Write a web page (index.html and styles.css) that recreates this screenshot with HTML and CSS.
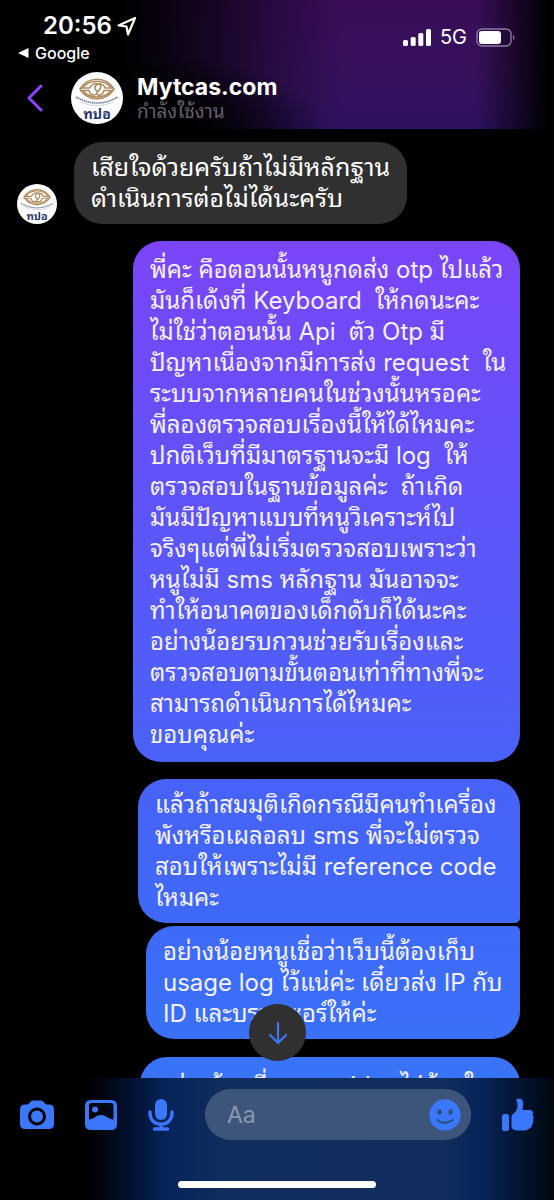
FILE: index.html
```html
<!DOCTYPE html>
<html lang="th">
<head>
<meta charset="utf-8">
<meta name="viewport" content="width=device-width, initial-scale=1">
<title>Mytcas.com</title>
<link rel="stylesheet" href="styles.css">
</head>
<body>
<div class="app">
  <header class="header">
    <div class="status">
      <div class="status-left">
        <div class="clock">20:56
          <svg width="20" height="20" viewBox="0 0 20 20"><path d="M1.500 9.5 18 2 11 18.500 9.500 10.500Z" fill="none" stroke="#fff" stroke-width="2.200" stroke-linejoin="round"/></svg>
        </div>
        <a class="return" href="#"><svg width="11" height="10" viewBox="0 0 11 10"><path d="M0 5 10.500 0V10Z" fill="#fff"/></svg>Google</a>
      </div>
      <div class="status-right">
        <svg width="28" height="19" viewBox="0 0 28 19" fill="#fff"><rect y="12" width="5" height="6" rx="1.500"/><rect x="7.700" y="9" width="5" height="9" rx="1.500"/><rect x="15.300" y="5" width="5" height="13" rx="1.500"/><rect x="23" y="1" width="5" height="17" rx="1.500"/></svg>
        <span>5G</span>
        <svg width="40" height="19" viewBox="0 0 40 19"><rect x="1" y="1" width="34" height="17" rx="5" fill="none" stroke="#8c79a6" stroke-width="1.400"/><rect x="3" y="3" width="22" height="13" rx="3" fill="#fff"/><path d="M37 7Q40 9.500 37 12Z" fill="#8c79a6"/></svg>
      </div>
    </div>
    <div class="contact">
      <button class="back" aria-label="Back"><svg width="16" height="28" viewBox="0 0 16 28"><path d="M14 2 2 14 14 26" fill="none" stroke="#8d43fb" stroke-width="3" stroke-linecap="round" stroke-linejoin="round"/></svg></button>
      <svg class="avatar" viewBox="0 0 52 52">
        <g id="crest">
          <circle cx="26" cy="26" r="26" fill="#fff"/>
          <g fill="none" stroke="#b08a5b" stroke-width="1.5">
            <path d="M9 17C17 4 35 4 43 17C35 30 17 30 9 17Z"/>
            <path d="M12 15.500C18 7 34 7 40 15.500M12 18.500C18 27 34 27 40 18.500"/>
            <path d="M9 16H18C20 16 20 12 24 11.500C29 11 31 14 29 17S24 20 26 22.500C28 24 32 23 33 18.500H43M9 18.500H18C19 23 23 24 26 22M43 16H34C33 12 29 11 26 12.500C22 15 24 19 28 20"/>
          </g>
          <path d="M5 25Q26 37 47 25" fill="none" stroke="#6d7d9b" stroke-width="1.6" stroke-dasharray="1.5 .6"/>
          <path d="M10 30Q26 37 42 30" fill="none" stroke="#a9b4c6" stroke-width="1" stroke-dasharray="1 .6"/>
          <text x="26" y="47" text-anchor="middle" class="crest-text">ทปอ</text>
        </g>
      </svg>
      <div>
        <h1 class="name">Mytcas.com</h1>
        <p class="presence">กำลังใช้งาน</p>
      </div>
    </div>
  </header>

  <main class="thread">
    <div class="row">
      <svg class="avatar small" viewBox="0 0 52 52"><use href="#crest"/></svg>
      <p class="bubble received">เสียใจด้วยครับถ้าไม่มีหลักฐาน<br>ดำเนินการต่อไม่ได้นะครับ</p>
    </div>
    <p class="bubble sent first">พี่คะ คือตอนนั้นหนูกดส่ง otp ไปแล้ว<br>มันก็เด้งที่ Keyboard &nbsp;ให้กดนะคะ<br>ไม่ใช่ว่าตอนนั้น Api &nbsp;ตัว Otp มี<br>ปัญหาเนื่องจากมีการส่ง request &nbsp;ใน<br>ระบบจากหลายคนในช่วงนั้นหรอคะ<br>พี่ลองตรวจสอบเรื่องนี้ให้ได้ไหมคะ<br>ปกติเว็บที่มีมาตรฐานจะมี log &nbsp;ให้<br>ตรวจสอบในฐานข้อมูลค่ะ &nbsp;ถ้าเกิด<br>มันมีปัญหาแบบที่หนูวิเคราะห์ไป<br>จริงๆแต่พี่ไม่เริ่มตรวจสอบเพราะว่า<br>หนูไม่มี sms หลักฐาน มันอาจจะ<br>ทำให้อนาคตของเด็กดับก็ได้นะคะ<br>อย่างน้อยรบกวนช่วยรับเรื่องและ<br>ตรวจสอบตามขั้นตอนเท่าที่ทางพี่จะ<br>สามารถดำเนินการได้ไหมคะ<br>ขอบคุณค่ะ</p>
    <p class="bubble sent second">แล้วถ้าสมมุติเกิดกรณีมีคนทำเครื่อง<br>พังหรือเผลอลบ sms พี่จะไม่ตรวจ<br>สอบให้เพราะไม่มี reference code<br>ไหมคะ</p>
    <p class="bubble sent third">อย่างน้อยหนูเชื่อว่าเว็บนี้ต้องเก็บ<br>usage log ไว้แน่ค่ะ เดี๋ยวส่ง IP กับ<br>ID และบราวเซอร์ให้ค่ะ</p>
    <p class="bubble sent fourth">อย่างน้อยที่ usage id จะไปด้วยใน</p>
    <button class="jump" aria-label="Scroll to latest"><svg width="20" height="24" viewBox="0 0 20 24"><path d="M10 2V22M2 14 10 22 18 14" fill="none" stroke="#3e77fa" stroke-width="2.200" stroke-linecap="round" stroke-linejoin="round"/></svg></button>
  </main>

  <footer class="footer">
    <form class="composer">
      <button type="button" aria-label="Camera"><svg width="34" height="29" viewBox="0 0 34 29"><path fill="#3b77fb" fill-rule="evenodd" d="M5 4.500H7C10 4.500 9.500.5 13 .5H21C24.500.5 24 4.500 27 4.500H29Q34 4.500 34 9.500V24Q34 29 29 29H5Q0 29 0 24V9.500Q0 4.500 5 4.500ZM17 7.500A9 9 0 1 0 17 25.500A9 9 0 1 0 17 7.500Z"/><circle cx="17" cy="16.500" r="6" fill="#3b77fb"/></svg></button>
      <button type="button" aria-label="Photo"><svg width="32" height="30" viewBox="0 0 32 30"><path fill="#3b77fb" fill-rule="evenodd" d="M6 0H26Q32 0 32 6V24Q32 30 26 30H6Q0 30 0 24V6Q0 0 6 0ZM6.500 3Q4 3 4 5.500V19.500C9 19.500 10.500 15 16 15S23 19.500 28.500 19.500V5.500Q28.500 3 26 3Z"/><circle cx="10" cy="9.500" r="3" fill="#3b77fb"/></svg></button>
      <button type="button" aria-label="Voice"><svg width="26" height="32" viewBox="0 0 26 32"><rect x="7" width="12" height="21" rx="6" fill="#3b77fb"/><path d="M2 13V14C2 29 24 29 24 14V13M13 25V30M6.500 30H19.500" fill="none" stroke="#3b77fb" stroke-width="3.400" stroke-linecap="round"/></svg></button>
      <div class="field">
        <input type="text" placeholder="Aa" aria-label="Message">
        <button type="button" aria-label="Emoji"><svg width="32" height="32" viewBox="0 0 32 32"><circle cx="16" cy="16" r="15.700" fill="#3b77fb"/><ellipse cx="10.500" cy="13" rx="2.200" ry="2.800" fill="#2d4f7d"/><ellipse cx="21.500" cy="13" rx="2.200" ry="2.800" fill="#2d4f7d"/><path d="M8.500 21Q16 27 23.500 21" fill="none" stroke="#2d4f7d" stroke-width="2.200" stroke-linecap="round"/></svg></button>
      </div>
      <button type="button" aria-label="Like"><svg width="32" height="34" viewBox="0 0 32 34" fill="#3b77fb"><rect x="0" y="16" width="7" height="17" rx="2.500"/><path d="M9.500 19Q9.500 17 11.500 15.500Q16 12 15.500 6L14.500 3Q14 .8 16.500.5Q22 .5 21 8L20.500 12H28Q31.500 12.500 31 15.500L30.500 17Q32.500 19 31 22Q32 24.500 29.800 27Q30 30 26.500 31Q25 32.500 22 32.500H15Q9.500 32 9.500 28Z"/></svg></button>
    </form>
    <div class="home"></div>
  </footer>
</div>
</body>
</html>
```
FILE: styles.css
```css
* { box-sizing: border-box; }
body {
  margin: 0;
  background: #000;
  color: #fff;
  font-family: Inter, "Noto Sans Thai Looped", Loma, Garuda, "Noto Sans Thai", sans-serif;
}
h1, p { margin: 0; }
svg { display: block; flex: none; }
button {
  display: grid;
  place-items: center;
  flex: none;
  padding: 0;
  border: 0;
  background: none;
}
.crest-text { font-size: 14px; font-weight: 700; fill: #27376b; }

.app {
  display: flex;
  flex-direction: column;
  height: 100vh;
  overflow: hidden;
}

.header {
  flex: none;
  padding: 12px 38px 4px 18px;
  background:
    radial-gradient(ellipse 34% 60% at 24% 100%, #000 30%, transparent),
    linear-gradient(90deg, #000 22%, #000a 36%, #0004 50%, transparent 62%, transparent 86%, #000 99%),
    linear-gradient(#390d58, #36115c 60%, #2e1160);
}
.status { display: flex; justify-content: space-between; }
.clock {
  display: flex;
  align-items: center;
  gap: 5px;
  padding-left: 25px;
  font-size: 24px;
  font-weight: 600;
  line-height: 28px;
}
.return {
  display: flex;
  align-items: center;
  gap: 6px;
  color: #fff;
  font-size: 16px;
  font-weight: 500;
  line-height: 26px;
  text-decoration: none;
}
.status-right {
  display: flex;
  align-items: center;
  gap: 9px;
  height: 50px;
  font-size: 20px;
}
.contact { display: flex; align-items: center; height: 59px; padding-top: 4px; }
.back { width: 34px; height: 44px; }
.avatar { width: 52px; height: 52px; margin: 0 14px 0 19px; }
.avatar.small { width: 40px; height: 40px; margin: 0 17px 0 0; }
.name { font-size: 23px; font-weight: 700; line-height: 28px; }
.presence { color: #66616c; font-size: 19px; line-height: 22px; }

.thread {
  position: relative;
  display: flex;
  flex: 1;
  flex-direction: column;
  align-items: flex-end;
  min-height: 0;
  padding: 13px 34px 0 17px;
  overflow: hidden;
}
.row { display: flex; align-items: flex-end; align-self: flex-start; }
.bubble {
  flex: none;
  padding: 10px 17px;
  border-radius: 28px;
  line-height: 31px;
  white-space: nowrap;
}
.received { width: 333px; background: #303030; font-size: 25px; }
.sent { color: #f4f2ff; font-size: 24px; }
.first { width: 387px; margin-top: 17px; padding: 13px 17px 12px; background: linear-gradient(#7b45f7, #6152f7 45%, #4962f8); }
.second { width: 382px; margin-top: 17px; border-bottom-right-radius: 5px; background: linear-gradient(#4762f8, #3f69f8); }
.third { width: 374px; margin-top: 3px; border-top-right-radius: 5px; background: linear-gradient(#3e6af8, #3a70f8); }
.fourth { width: 380px; margin-top: 18px; padding-top: 13px; background: #3973f8; }
.jump {
  position: absolute;
  bottom: 17px;
  left: calc(50% - 28px);
  width: 57px;
  height: 57px;
  border-radius: 50%;
  background: #303030;
}

.footer {
  flex: none;
  padding: 11px 20px 12px;
  background: linear-gradient(90deg, #000 16%, #021232 24%, #07245a 30%, #102e5e 42%, #102d5d 80%, #07245a 87%, #000814 99%);
}
.composer { display: flex; align-items: center; gap: 31px; }
.field {
  display: flex;
  flex: 1;
  align-items: center;
  min-width: 0;
  height: 51px;
  padding: 0 10px 0 22px;
  border-radius: 26px;
  background: #3d557b;
}
.field input {
  flex: 1;
  min-width: 0;
  padding: 0;
  border: 0;
  background: none;
  color: #fff;
  font: inherit;
  font-size: 23px;
}
.field input::placeholder { color: #8a98ae; }
.home {
  width: 198px;
  height: 7px;
  margin: 41px auto 0;
  border-radius: 4px;
  background: #fff;
}
```
